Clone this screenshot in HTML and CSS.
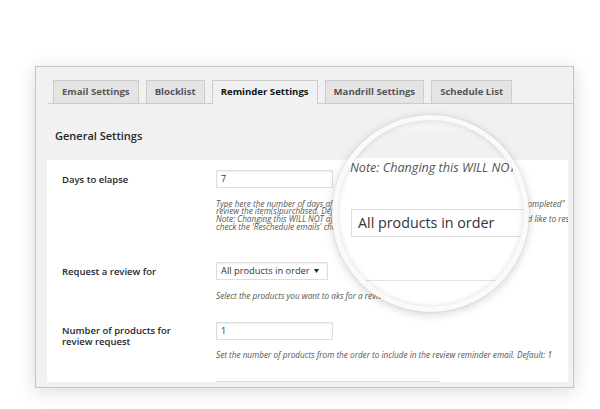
FILE: index.html
```html
<!DOCTYPE html>
<html lang="en">
<head>
<meta charset="utf-8">
<title>Reminder Settings</title>
<link rel="stylesheet" href="styles.css">
</head>
<body>
<div class="stage">
  <div class="panel">
    <nav class="tabs">
      <span class="tab">Email Settings</span>
      <span class="tab">Blocklist</span>
      <span class="tab active">Reminder Settings</span>
      <span class="tab">Mandrill Settings</span>
      <span class="tab">Schedule List</span>
    </nav>
    <h2 class="title">General Settings</h2>
    <div class="form">
      <div class="row">
        <div class="label">Days to elapse</div>
        <div class="field">
          <div class="input">7</div>
          <p class="desc tall">Type here the number of days after which the reminder should be sent once order is "completed"<br>review the item(s)purchased. Default: 7 days.<br>Note: Changing this WILL NOT affect the emails that are already scheduled. If you would like to reschedule them,<br>check the 'Reschedule emails' checkbox below.</p>
        </div>
      </div>
      <div class="row">
        <div class="label">Request a review for</div>
        <div class="field">
          <div class="select"><span>All products in order</span><svg class="caret" width="5" height="4" viewBox="0 0 5 4"><polygon points="0,0 5,0 2.5,4" fill="#222"/></svg></div>
          <p class="desc">Select the products you want to aks for a review.</p>
        </div>
      </div>
      <div class="row">
        <div class="label">Number of products for review request</div>
        <div class="field">
          <div class="input">1</div>
          <p class="desc">Set the number of products from the order to include in the review reminder email. Default: 1</p>
        </div>
      </div>
      <div class="row">
        <div class="label">Email subject</div>
        <div class="field">
          <div class="input wide"></div>
        </div>
      </div>
    </div>
  </div>
  <div class="magnifier">
    <div class="mag-top"></div>
    <div class="mag-body">
      <p class="mag-note">Note: Changing this WILL NOT affect</p>
      <div class="mag-select">All products in order</div>
      <div class="mag-line"></div>
    </div>
  </div>
</div>
</body>
</html>
```

FILE: styles.css
```css
* { box-sizing: border-box; }

body {
  margin: 0;
  background: #fff;
  font-family: "Open Sans", "Liberation Sans", sans-serif;
}

.stage {
  position: relative;
  width: 600px;
  height: 409px;
  padding: 66px 0 0 35px;
  overflow: hidden;
}

.panel {
  width: 539px;
  height: 322px;
  background: #f1f1f1;
  border: 1px solid #c4c4c4;
  box-shadow: 0 3px 18px rgba(0, 0, 0, 0.15);
  display: flex;
  flex-direction: column;
}

.tabs {
  display: flex;
  align-items: flex-end;
  gap: 7px;
  height: 24px;
  margin: 13px 0 0 12px;
  padding-left: 5px;
  border-bottom: 1px solid #ccc;
}

.tab {
  height: 23px;
  line-height: 21px;
  padding: 0 8px;
  border: 1px solid #ccc;
  border-bottom: 0;
  background: #e4e4e4;
  font-size: 9.6px;
  font-weight: 700;
  color: #555;
  white-space: nowrap;
}

.tab.active {
  background: #f1f1f1;
  color: #111;
  height: 24px;
  margin-bottom: -1px;
}

.title {
  margin: 25px 0 17px 19px;
  font-size: 11px;
  font-weight: 600;
  line-height: 14px;
  color: #23282d;
}

.form {
  height: 222px;
  margin: 0 5px 0 11px;
  padding: 10px 0 0 15px;
  background: #fff;
  overflow: hidden;
}

.row {
  display: flex;
  padding-bottom: 22px;
}

.label {
  width: 154px;
  flex: none;
  padding: 3.5px 20px 0 0;
  font-size: 9.5px;
  font-weight: 600;
  line-height: 11px;
  color: #23282d;
}

.field {
  flex: 1;
  min-width: 0;
}

.input,
.select {
  height: 18px;
  width: 117px;
  border: 1px solid #ddd;
  box-shadow: inset 0 1px 2px rgba(0, 0, 0, 0.07);
  padding: 0 4px;
  font-size: 9px;
  line-height: 16px;
  color: #333;
  background: #fff;
}

.input.wide { width: 224px; }

.select {
  width: 112px;
  display: flex;
  align-items: center;
  justify-content: space-between;
  padding: 0 8px 0 4px;
  font-size: 9.3px;
}

.caret { display: block; }

.desc {
  margin: 11.5px 0 0;
  font-size: 8.2px;
  line-height: 7.7px;
  font-style: italic;
  color: #555;
  white-space: nowrap;
}

.desc.tall { margin-bottom: 10px; }

.magnifier {
  position: absolute;
  left: 332px;
  top: 115px;
  width: 197px;
  height: 197px;
  border-radius: 50%;
  border: 5px solid #fafafa;
  box-shadow: 0 0 0 1px rgba(0, 0, 0, 0.03), 0 2px 10px rgba(0, 0, 0, 0.18);
  overflow: hidden;
  background: #fff;
}

.magnifier::after {
  content: "";
  position: absolute;
  inset: 0;
  border-radius: 50%;
  box-shadow: inset 0 0 6px rgba(0, 0, 0, 0.14);
}

.mag-top {
  height: 38px;
  background: #f1f1f1;
  border-top: 10px solid #f5f5f5;
}

.mag-body {
  padding: 2px 0 0 13px;
}

.mag-note {
  margin: 0;
  font-size: 12.6px;
  line-height: 16px;
  font-style: italic;
  color: #555;
  white-space: nowrap;
}

.mag-select {
  margin: 33px 0 0 1px;
  width: 300px;
  height: 28px;
  border: 1px solid #ddd;
  padding-left: 6px;
  font-size: 14.3px;
  line-height: 26px;
  color: #333;
  white-space: nowrap;
}

.mag-line {
  margin-top: 43px;
  height: 40px;
  border-top: 1px solid #e2e2e2;
}
```
